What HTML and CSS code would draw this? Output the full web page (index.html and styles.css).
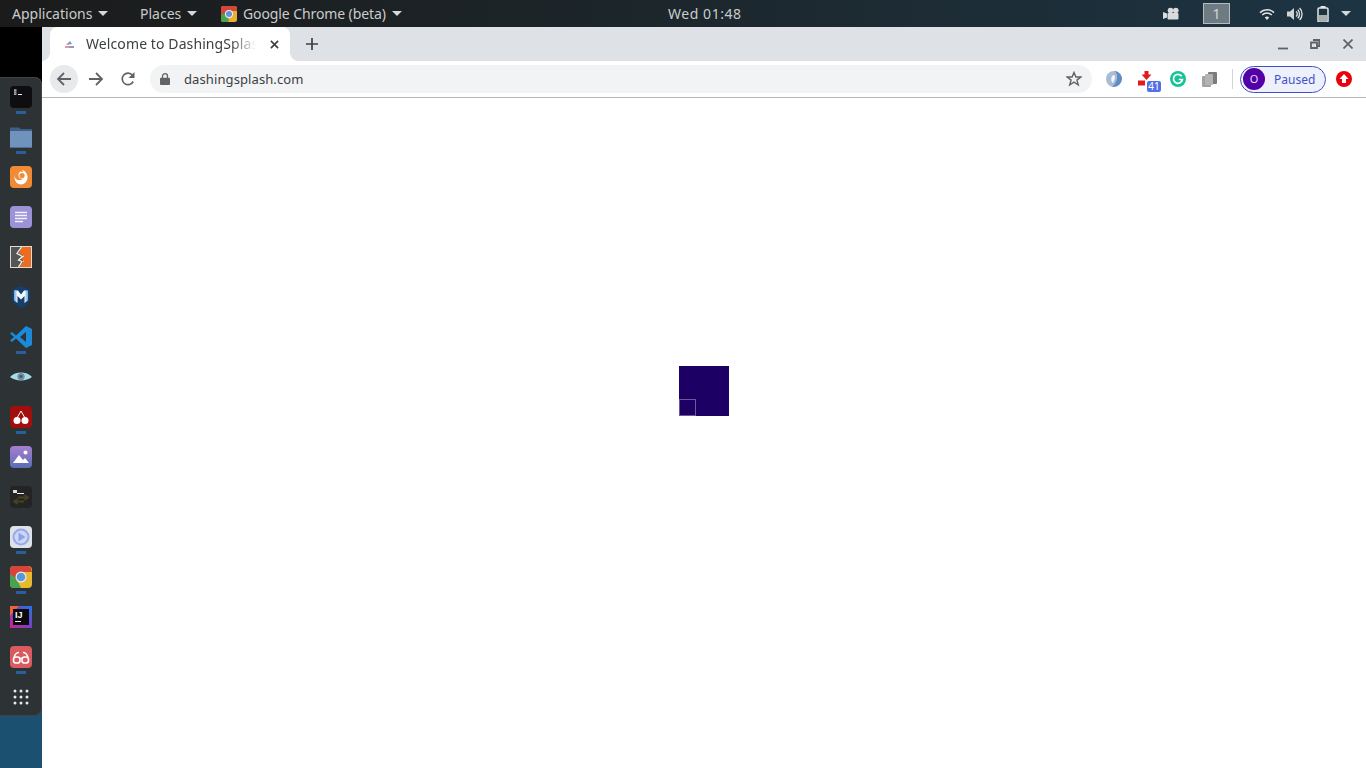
FILE: index.html
```html
<!DOCTYPE html>
<html lang="en">
<head>
<meta charset="utf-8">
<title>Welcome to DashingSplash</title>
<link rel="stylesheet" href="styles.css">
</head>
<body>
<header class="topbar">
  <div class="tb-left">
    <span class="menu menu-apps">Applications<i class="caret"></i></span>
    <span class="menu menu-places">Places<i class="caret"></i></span>
    <span class="menu menu-app">
      <svg class="tb-chrome" viewBox="0 0 16 16"><rect width="16" height="16" rx="2.5" fill="#e8b02e"/><path d="M0 6V2.500A2.500 2.500 0 0 1 2.500 0H13.500A2.500 2.500 0 0 1 16 2.500V5H8A3 3 0 0 0 5 8L2.500 12 0 10Z" fill="#d2473a"/><path d="M0 9L4 7 8 14 7 16H2.500A2.500 2.500 0 0 1 0 13.500Z" fill="#4ba250"/><circle cx="8" cy="8" r="4" fill="#eef"/><circle cx="8" cy="8" r="3" fill="#5f94d6"/></svg>
      <span class="app-name">Google Chrome (beta)</span><i class="caret"></i></span>
  </div>
  <div class="clock">Wed 01:48</div>
  <div class="tb-right">
    <svg class="tb-cam" viewBox="0 0 16 14"><path d="M0 5 4 6.500V10.500L0 12Z" fill="#d8dcdc"/><circle cx="7.500" cy="3.500" r="2.800" fill="#d8dcdc"/><circle cx="12.800" cy="3.500" r="2.800" fill="#d8dcdc"/><rect x="4.500" y="6" width="11" height="6.500" rx="1" fill="#d8dcdc"/></svg>
    <span class="workspace">1</span>
    <svg class="tb-wifi" viewBox="0 0 16 12"><path d="M8 12 5.800 9.600A3.200 3.200 0 0 1 10.200 9.600Z" fill="#e4e6e6"/><path d="M1 4.600A10 10 0 0 1 15 4.600M3.200 7A7 7 0 0 1 12.800 7" fill="none" stroke="#e4e6e6" stroke-width="1.500"/></svg>
    <svg class="tb-vol" viewBox="0 0 16 14"><path d="M0 4.500H3L7 1V13L3 9.500H0Z" fill="#cfd3d3"/><path d="M9 4.500A3 3 0 0 1 9 9.500M10.800 2.800A6 6 0 0 1 10.800 11.200M12.600 1A8.500 8.500 0 0 1 12.600 13" fill="none" stroke="#e4e6e6" stroke-width="1.300"/></svg>
    <svg class="tb-bat" viewBox="0 0 12 16"><rect x="3.500" y="0" width="5" height="2" fill="#e4e6e6"/><rect x="1" y="2" width="10" height="14" rx="1.200" fill="none" stroke="#e4e6e6" stroke-width="1.500"/><rect x="2" y="9" width="8" height="6" fill="#a8adad"/></svg>
    <i class="caret caret-end"></i>
  </div>
</header>
<div class="desktop">
  <aside class="side">
    <nav class="dock">
      <div class="dock-item on"><svg viewBox="0 0 22 22"><rect width="22" height="22" rx="4" fill="#0e0e10"/><rect x="4" y="3.500" width="2.500" height="1.200" fill="#eee"/><rect x="4" y="5.500" width="2.500" height="1.200" fill="#ddd"/><rect x="4" y="7.500" width="2.500" height="1.200" fill="#eee"/><rect x="8" y="8" width="4" height="1" fill="#eee"/></svg></div>
      <div class="dock-item on"><svg viewBox="0 0 22 22"><path d="M0 1.500H9L11 3H22V21.500H0Z" fill="#3f5f84"/><path d="M0 5H22V21.500H0Z" fill="#6f93bd"/></svg></div>
      <div class="dock-item"><svg viewBox="0 0 22 22"><rect width="22" height="22" rx="4" fill="#f08a35"/><circle cx="11" cy="12" r="6.500" fill="#fff"/><path d="M4.500 10C6 6.500 8 5.500 10.500 5.500 9 7 8 8 8.500 10 9 12 11 13.500 13.500 12.500 12.500 14 8 15 5.500 12.500Z" fill="#f08a35"/><path d="M12 4C15 4.500 17.500 7.500 17.500 11 16.500 9 15 8 13 8 14 7 13.500 5.500 12 4Z" fill="#fff"/><circle cx="12" cy="9.500" r="2.600" fill="#f08a35"/></svg></div>
      <div class="dock-item"><svg viewBox="0 0 22 22"><rect width="22" height="22" rx="4" fill="#9b92d8"/><path d="M5 6.500H17M5 9.500H17M5 12.500H17M5 15.500H13" stroke="#f3f1fb" stroke-width="1.300"/></svg></div>
      <div class="dock-item"><svg viewBox="0 0 22 22"><rect width="22" height="22" fill="#dcdcdc"/><rect x="1" y="1" width="12" height="20" fill="#555"/><path d="M11.500 1H21V21H9L14 15 11 12.500 14.500 10 9 7.500Z" fill="#ee6c1e"/><path d="M11.500 1 7 7.500 12.500 10.500 8.500 14 12 15.500 8.500 21" fill="none" stroke="#f2f2f2" stroke-width="1.300"/></svg></div>
      <div class="dock-item"><svg viewBox="0 0 22 22"><path d="M11 0 20 3.500V12C20 17 15 20 11 22 7 20 2 17 2 12V3.500Z" fill="#163f6e"/><path d="M4.500 4.500H8L11 8.500 14 4.500H17.500V14.500L14.500 17V10L11 13.500 7.500 10V17L4.500 14.500Z" fill="#f4f8ff"/><path d="M4.500 4.500H6.500V15.800L4.500 14.500Z M15.500 5H17.500V14.500L15.500 16Z" fill="#8fcbf2"/></svg></div>
      <div class="dock-item on"><svg viewBox="0 0 22 22"><path d="M16 0 22 3V19L16 22 6 12.500 2 16 0 14.500 4 11 0 7.500 2 6 6 9.500ZM16 6 10 11 16 16Z" fill="#1b8ad8"/></svg></div>
      <div class="dock-item"><svg viewBox="0 0 24 22"><path d="M0 11C6 4.500 18 4.500 24 11 18 16 6 16 0 11Z" fill="#a9dbe6"/><circle cx="12" cy="10.500" r="4" fill="#6f8fa3"/><circle cx="12" cy="10.500" r="1.600" fill="#42586a"/></svg></div>
      <div class="dock-item on"><svg viewBox="0 0 22 22"><rect width="22" height="22" rx="4" fill="#a20d0d"/><path d="M7 12 11 5 15 12" fill="none" stroke="#fff" stroke-width="1"/><circle cx="7" cy="14.500" r="3.500" fill="#fff"/><circle cx="15" cy="14.500" r="3.500" fill="#fff"/></svg></div>
      <div class="dock-item"><svg viewBox="0 0 22 22"><defs><linearGradient id="g1" x1="0" y1="0" x2="0" y2="1"><stop offset="0" stop-color="#a77fd0"/><stop offset="1" stop-color="#5a6db5"/></linearGradient></defs><rect width="22" height="22" rx="4" fill="url(#g1)"/><circle cx="15.500" cy="6.500" r="2" fill="#fff"/><path d="M3 17 9 9 13 14 15 12 19 17Z" fill="#fff"/></svg></div>
      <div class="dock-item"><svg viewBox="0 0 22 22"><rect width="22" height="22" rx="4" fill="#242424"/><rect x="3" y="4" width="4" height="3" fill="#ddd"/><rect x="7" y="7" width="7" height="1" fill="#eee"/><path d="M8 11.500H18M14.500 9 18 11.500 14.500 14M4 15.500H14M7.500 13 4 15.500 7.500 18" fill="none" stroke="#45431f" stroke-width="1.800"/></svg></div>
      <div class="dock-item on"><svg viewBox="0 0 22 22"><rect width="22" height="22" rx="4" fill="#dfe2e8"/><circle cx="11" cy="11" r="7.500" fill="#cdd7f3" stroke="#96aaea" stroke-width="2"/><path d="M8.500 6.500 15.500 11 8.500 15.500Z" fill="#8ca3ea"/></svg></div>
      <div class="dock-item on"><svg viewBox="0 0 22 22"><rect width="22" height="22" rx="4" fill="#e7b92f"/><path d="M0 9V4A4 4 0 0 1 4 0H18A4 4 0 0 1 21 2L22 6H11L6 14Z" fill="#d8443a"/><path d="M0 8 6 12 11 22H4A4 4 0 0 1 0 18Z" fill="#4aa250"/><circle cx="11" cy="11" r="5.500" fill="#e8eef6"/><circle cx="11" cy="11" r="4.300" fill="#5a97d8"/></svg></div>
      <div class="dock-item"><svg viewBox="0 0 22 22"><defs><linearGradient id="g2" x1="0" y1="1" x2="1" y2="0"><stop offset="0" stop-color="#c9278f"/><stop offset=".5" stop-color="#7a3fc5"/><stop offset="1" stop-color="#1f78e8"/></linearGradient></defs><rect width="22" height="22" fill="url(#g2)"/><path d="M0 0H9L0 10Z" fill="#f0603a"/><rect x="3" y="3" width="16" height="16" fill="#0b0b0b"/><text class="ij" x="5" y="11.500">IJ</text><rect x="5" y="15" width="6" height="1" fill="#eee"/></svg></div>
      <div class="dock-item on"><svg viewBox="0 0 22 22"><rect width="22" height="22" rx="4" fill="#d95a5f"/><rect x="3.500" y="11" width="6.500" height="6" rx="2.600" fill="none" stroke="#fff" stroke-width="1.600"/><rect x="12" y="11" width="6.500" height="6" rx="2.600" fill="none" stroke="#fff" stroke-width="1.600"/><path d="M10 12.500Q11 11.800 12 12.500M4 11.500C5 8 7 6.500 9 6.500M18 11.500C17 8 15 6.500 13 6.500" fill="none" stroke="#fff" stroke-width="1.400"/></svg></div>
      <div class="dock-item"><svg class="grid-ico" viewBox="0 0 16 16"><g fill="#e8e8e8"><circle cx="2" cy="2" r="1.500"/><circle cx="8" cy="2" r="1.500"/><circle cx="14" cy="2" r="1.500"/><circle cx="2" cy="8" r="1.500"/><circle cx="8" cy="8" r="1.500"/><circle cx="14" cy="8" r="1.500"/><circle cx="2" cy="14" r="1.500"/><circle cx="8" cy="14" r="1.500"/><circle cx="14" cy="14" r="1.500"/></g></svg></div>
    </nav>
  </aside>
  <main class="browser">
    <div class="tabstrip">
      <div class="tab">
        <svg class="favicon" viewBox="0 0 10 8"><path d="M1 5 5 1 7 4Z" fill="#8d8fb3"/><path d="M0 6.500H4V7.500H0Z" fill="#d22a3c"/><path d="M4 6.500H9V7.500H4Z" fill="#2c2a8a"/></svg>
        <span class="tab-title">Welcome to DashingSplash</span>
        <svg class="tab-close" viewBox="0 0 10 10"><path d="M1 1 9 9M9 1 1 9" stroke="#3c4043" stroke-width="1.800"/></svg>
      </div>
      <svg class="newtab" viewBox="0 0 12 12"><path d="M6 0V12M0 6H12" stroke="#3c4043" stroke-width="1.700"/></svg>
      <div class="winctl">
        <svg class="w-min" viewBox="0 0 10 10"><path d="M0 8.500H10" stroke="#5f6368" stroke-width="1.800"/></svg>
        <svg class="w-max" viewBox="0 0 10 10"><path d="M3 1H9.200V7H7M1 3.500H7V9H1Z" fill="none" stroke="#5f6368" stroke-width="1.800"/></svg>
        <svg class="w-close" viewBox="0 0 10 10"><path d="M.5 .5 9.500 9.500M9.500 .5 .5 9.500" stroke="#5f6368" stroke-width="1.700"/></svg>
      </div>
    </div>
    <div class="toolbar">
      <span class="navbtn back"><svg viewBox="0 0 16 16"><path d="M15 8H2M8 2 2 8 8 14" fill="none" stroke="#5f6368" stroke-width="1.800"/></svg></span>
      <span class="navbtn"><svg viewBox="0 0 16 16"><path d="M1 8H14M8 2 14 8 8 14" fill="none" stroke="#5f6368" stroke-width="1.800"/></svg></span>
      <span class="navbtn"><svg viewBox="0 0 16 16"><path d="M13.200 10.500A5.800 5.800 0 1 1 12.500 4.200" fill="none" stroke="#5f6368" stroke-width="1.700"/><path d="M14.500 1V7H8.500Z" fill="#5f6368"/></svg></span>
      <div class="omnibox">
        <svg class="lock" viewBox="0 0 10 12"><path d="M2.500 5V3.200A2.500 2.500 0 0 1 7.500 3.200V5" fill="none" stroke="#5f6368" stroke-width="1.300"/><rect y="4.800" width="10" height="7.200" rx="1" fill="#5f6368"/></svg>
        <span class="url">dashingsplash.com</span>
        <svg class="star" viewBox="0 0 16 16"><path d="M8 1.500 9.900 6H14.800L10.900 9.100 12.300 14 8 11.200 3.700 14 5.100 9.100 1.200 6H6.100Z" fill="none" stroke="#5f6368" stroke-width="1.400"/></svg>
      </div>
      <div class="exts">
        <svg class="e1" viewBox="0 0 16 16"><circle cx="8" cy="8" r="8" fill="#a9bcd4"/><path d="M8 0C13 2 12 11 6 16 13 16 16 11 16 7 15 3 12 0 8 0Z" fill="#5f8cc4"/><path d="M7.500 4C9.500 4 9.500 9 6.500 12 4.500 9.500 5 5 7.500 4Z" fill="#f2f6fb"/></svg>
        <span class="e2"><svg viewBox="0 0 16 15"><path d="M2.500 0H6.500V3.500H9.500L4.500 9 -.5 3.500H2.500Z" fill="#e21b1b" transform="translate(4 0)"/><rect y="9.500" width="7" height="5" fill="#e21b1b"/></svg><b class="count">41</b></span>
        <svg class="e3" viewBox="0 0 16 16"><circle cx="8" cy="8" r="8" fill="#15c39a"/><path d="M11.700 5.300A4.500 4.500 0 1 0 12.400 8.500H8.800" fill="none" stroke="#fff" stroke-width="1.700"/></svg>
        <svg class="e4" viewBox="0 0 15 15"><rect y="4" width="9" height="11" rx="1" fill="#a3a3a3"/><rect x="6" y="0" width="9" height="12" rx="1" fill="#7c7c7c"/><rect x="3" y="2" width="8" height="11" rx="1" fill="#b4b4b4"/></svg>
      </div>
      <span class="divider"></span>
      <div class="profile"><span class="avatar">O</span><span class="paused">Paused</span></div>
      <svg class="e5" viewBox="0 0 16 16"><circle cx="8" cy="8" r="8" fill="#e8000b"/><path d="M8 3 12.500 8H10V12H6V8H3.500Z" fill="#fff"/></svg>
    </div>
    <div class="page">
      <div class="loader"><span class="loader-cell"></span></div>
    </div>
  </main>
</div>
</body>
</html>
```
FILE: styles.css
```css
* { box-sizing: border-box; }
html, body { margin: 0; padding: 0; height: 100%; overflow: hidden; }
body { width: 1366px; height: 768px; display: flex; flex-direction: column; font-family: "Noto Sans", "Open Sans", sans-serif; background: #fff; }
svg { display: block; flex: none; }

.topbar { height: 27px; flex: none; display: grid; grid-template-columns: 668px auto 1fr; align-items: center; background: linear-gradient(90deg, #1b1b1b 0%, #1c2428 40%, #1d3443 100%); color: #d9dcdc; font-size: 14px; }
.tb-left { display: flex; align-items: center; padding-left: 12px; }
.menu { display: flex; align-items: center; white-space: nowrap; color: #c9cccc; }
.menu-apps { width: 128px; }
.menu-places { width: 81px; }
.tb-chrome { width: 16px; height: 16px; margin-right: 6px; }
.app-name { letter-spacing: -.1px; }
.caret { display: block; width: 0; height: 0; margin-left: 6px; border-left: 5px solid transparent; border-right: 5px solid transparent; border-top: 5px solid #d5d8d8; }
.clock { color: #c9cccc; font-size: 14px; letter-spacing: .55px; }
.tb-right { display: flex; align-items: center; justify-content: flex-end; padding-right: 15px; }
.tb-cam { width: 16px; height: 14px; margin-right: 24px; }
.workspace { width: 27px; height: 21px; margin-right: 29px; background: #6f7b82; border: 1px solid #b5bcbf; color: #d5d8d8; font-size: 14px; text-align: center; line-height: 19px; }
.tb-wifi { width: 16px; height: 12px; margin-right: 12px; }
.tb-vol { width: 16px; height: 14px; margin-right: 14px; }
.tb-bat { width: 12px; height: 16px; margin-right: 12px; }
.caret-end { margin-left: 0; }

.desktop { flex: 1; display: flex; min-height: 0; }
.side { width: 42px; flex: none; background: linear-gradient(#000 0 300px, #1c5070 300px); padding-top: 50px; }
.dock { height: 639px; background: #2d3234; border-top-right-radius: 8px; border-bottom-right-radius: 8px; box-shadow: inset -1px 0 0 #3f4446, inset 0 1px 0 #3f4446, inset 0 -1px 0 #3f4446; display: flex; flex-direction: column; }
.dock-item { height: 40px; flex: none; position: relative; display: flex; align-items: center; justify-content: center; }
.dock-item svg { width: 22px; height: 22px; }
.dock-item .grid-ico { width: 16px; height: 16px; }
.dock-item.on::after { content: ""; position: absolute; left: 16px; bottom: 3px; width: 10px; height: 3px; background: #2a5f9e; }
.ij { font: 700 9px "Liberation Sans", sans-serif; fill: #fff; }

.browser { flex: 1; min-width: 0; display: flex; flex-direction: column; background: #fff; }
.tabstrip { height: 34px; flex: none; display: flex; align-items: flex-end; background: #dee1e6; padding-left: 8px; }
.tab { position: relative; width: 240px; height: 34px; display: flex; align-items: center; background: #fff; border-radius: 8px 8px 0 0; padding-left: 15px; color: #3c4043; font-size: 14px; }
.tab::before, .tab::after { content: ""; position: absolute; bottom: 0; width: 8px; height: 8px; }
.tab::before { left: -8px; background: radial-gradient(circle at 0 0, transparent 7.500px, #fff 8px); }
.tab::after { right: -8px; background: radial-gradient(circle at 100% 0, transparent 7.500px, #fff 8px); }
.favicon { width: 10px; height: 8px; margin-right: 11px; }
.tab-title { width: 172px; margin-top: -2px; letter-spacing: .1px; overflow: hidden; white-space: nowrap; -webkit-mask-image: linear-gradient(90deg, #000 84%, transparent 99%); mask-image: linear-gradient(90deg, #000 84%, transparent 99%); }
.tab-close { width: 9px; height: 9px; margin-left: 12px; }
.newtab { width: 12px; height: 12px; margin: 0 0 11px 16px; }
.winctl { margin-left: auto; height: 34px; display: flex; align-items: center; padding-right: 13px; }
.w-min { width: 10px; height: 10px; margin-right: 22px; margin-top: 2px; }
.w-max { width: 10px; height: 10px; margin-right: 23px; }
.w-close { width: 10px; height: 10px; }

.toolbar { height: 37px; flex: none; display: flex; align-items: center; background: #fff; border-bottom: 1px solid #b5b5b5; padding-left: 8px; }
.navbtn { width: 28px; height: 28px; margin-right: 4px; border-radius: 50%; display: flex; align-items: center; justify-content: center; }
.navbtn svg { width: 16px; height: 16px; }
.navbtn.back { background: #e8e9eb; }
.omnibox { width: 942px; height: 28px; margin-left: 4px; border-radius: 14px; background: #f1f3f4; display: flex; align-items: center; padding: 0 10px; color: #3c4043; font-size: 13px; }
.lock { width: 10px; height: 12px; margin-right: 14px; }
.url { flex: 1; letter-spacing: .1px; }
.star { width: 16px; height: 16px; }
.exts { display: flex; align-items: center; margin-left: 14px; }
.e1 { width: 16px; height: 16px; margin-right: 16px; }
.e2 { position: relative; width: 16px; height: 16px; margin-right: 16px; display: block; }
.e2 svg { width: 16px; height: 15px; }
.count { position: absolute; left: 9px; top: 10px; width: 14px; height: 11px; background: #5470e8; border-radius: 2px; color: #fff; font: 400 10px/11px "Noto Sans", sans-serif; text-align: center; }
.e3 { width: 16px; height: 16px; margin-right: 16px; }
.e4 { width: 15px; height: 15px; }
.divider { width: 1px; height: 20px; margin-left: 15px; background: #d3d5d8; }
.profile { width: 86px; height: 27px; margin-left: 7px; border: 1px solid #3d52c9; border-radius: 14px; background: #eef1fb; display: flex; align-items: center; padding-left: 2px; color: #3d52c9; font-size: 12px; }
.avatar { width: 22px; height: 22px; border-radius: 50%; background: #5300a6; color: #e5d9f2; text-align: center; line-height: 22px; font-size: 11px; }
.paused { margin-left: 9px; }
.e5 { width: 16px; height: 16px; margin-left: 10px; }

.page { flex: 1; min-height: 0; display: flex; align-items: center; justify-content: center; padding-bottom: 84px; background: #fff; }
.loader { width: 50px; height: 50px; background: #1d0063; display: flex; align-items: flex-end; }
.loader-cell { width: 17px; height: 17px; border: 1px solid #6d5a9c; }
```
